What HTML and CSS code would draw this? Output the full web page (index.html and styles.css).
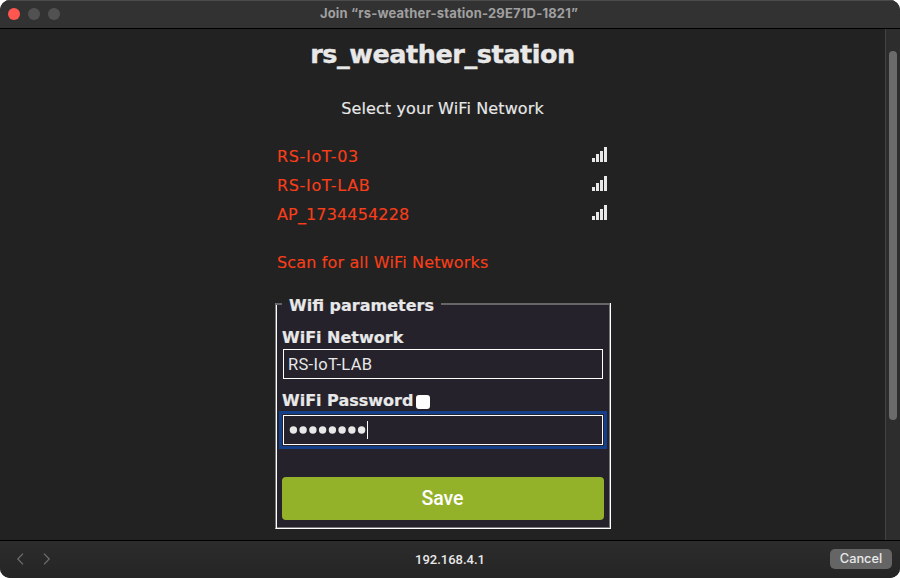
FILE: index.html
```html
<!DOCTYPE html>
<html lang="en">
<head>
<meta charset="utf-8">
<title>Join network</title>
<link rel="stylesheet" href="styles.css">
</head>
<body>
<div class="window">
  <header class="titlebar">
    <div class="lights"><i class="light close"></i><i class="light"></i><i class="light"></i></div>
    <span class="window-title">Join “rs-weather-station-29E71D-1821”</span>
  </header>
  <div class="viewport">
    <main class="page">
      <h1><span>rs_weather_station</span></h1>
      <p class="intro">Select your WiFi Network</p>
      <ul class="networks">
        <li><a class="wide">RS-IoT-03</a><svg class="signal" viewBox="0 0 15 15"><path d="M0 11h3v4H0zM4 7h3v8H4zM8 4h3v11H8zM12 0h3v15h-3z"/></svg></li>
        <li><a class="wide">RS-IoT-LAB</a><svg class="signal" viewBox="0 0 15 15"><path d="M0 11h3v4H0zM4 7h3v8H4zM8 4h3v11H8zM12 0h3v15h-3z"/></svg></li>
        <li><a>AP_1734454228</a><svg class="signal" viewBox="0 0 15 15"><path d="M0 11h3v4H0zM4 7h3v8H4zM8 4h3v11H8zM12 0h3v15h-3z"/></svg></li>
      </ul>
      <a class="scan">Scan for all WiFi Networks</a>
      <section class="panel">
        <div class="legend"><i class="stub"></i><b>Wifi parameters</b><i class="rule"></i></div>
        <div class="fields">
          <label class="label">WiFi Network</label>
          <div class="input">RS-IoT-LAB</div>
          <label class="label pass"><span>WiFi Password</span><i class="check"></i></label>
          <div class="input focused"><svg class="dots" viewBox="0 0 77 8"><g><circle cx="4.4" cy="4" r="3.7"/><circle cx="14.1" cy="4" r="3.7"/><circle cx="23.9" cy="4" r="3.7"/><circle cx="33.6" cy="4" r="3.7"/><circle cx="43.4" cy="4" r="3.7"/><circle cx="53.1" cy="4" r="3.7"/><circle cx="62.9" cy="4" r="3.7"/><circle cx="72.6" cy="4" r="3.7"/></g></svg><i class="caret"></i></div>
          <div class="save">Save</div>
        </div>
      </section>
    </main>
    <div class="scrollbar"><div class="thumb"></div></div>
  </div>
  <footer class="bottombar">
    <div class="nav">
      <svg viewBox="0 0 34 12"><path d="M6 .7.8 6 6 11.3M27 .7 32.2 6 27 11.3"/></svg>
    </div>
    <span class="address">192.168.4.1</span>
    <div class="cancel">Cancel</div>
  </footer>
</div>
</body>
</html>
```

FILE: styles.css
```css
* { box-sizing: border-box; }
html { background: #fff; }
body { margin: 0; width: 900px; height: 578px; overflow: hidden; color: #e8e8e8; }
.window { width: 900px; height: 578px; display: flex; flex-direction: column; background: #222; border-radius: 10px; overflow: hidden; }
.titlebar { height: 29px; flex: none; display: grid; grid-template-columns: 100px 1fr 102px; background: #323232; border-top: 1px solid #4b4b4b; border-bottom: 1px solid #000; }
.lights { display: flex; gap: 8px; padding: 7px 0 0 8px; }
.light { width: 12px; height: 12px; border-radius: 50%; background: #515151; }
.light.close { background: #ff564f; }
.window-title { font: 700 13px/25px Inter, sans-serif; letter-spacing: .18px; color: #a0a0a0; text-align: center; white-space: nowrap; }
.viewport { height: 511px; flex: none; display: flex; overflow: hidden; }
.page { width: 885px; padding-left: 275px; font: 16px/20px "DejaVu Sans", sans-serif; white-space: nowrap; }
h1 { width: 335px; margin: 9px 0 0; font-size: 25.5px; line-height: 32px; letter-spacing: -.45px; text-align: center; -webkit-text-stroke: .4px; }
.intro { width: 335px; margin: 29px 0 0; letter-spacing: .12px; text-align: center; -webkit-text-stroke: .15px; }
.networks { list-style: none; width: 332px; margin: 24px 0 0; padding: 0 0 0 2px; }
.networks li { height: 29px; display: flex; justify-content: space-between; align-items: flex-start; padding-top: 4px; }
.networks a, .scan { color: #fa3e19; line-height: 20px; letter-spacing: .15px; -webkit-text-stroke: .1px; }
.networks .wide { letter-spacing: .66px; }
.signal { width: 15px; height: 15px; fill: #e8e8e8; }
.scan { display: block; margin: 23px 0 0 2px; }
.panel { width: 336px; height: 226px; margin-top: 30px; background: #25222b; border-left: 1px solid #777; border-right: 1px solid #fff; border-bottom: 1px solid #fff; box-shadow: inset 1px 0 #fff, inset -1px -1px #777; }
.legend { height: 2px; display: flex; align-items: center; }
.stub { width: 6px; height: 2px; background: #666; }
.legend b { width: 159px; padding-left: 7px; height: 20px; line-height: 23px; -webkit-text-stroke: .2px; }
.rule { flex: 1; height: 2px; background: #666; }
.fields { padding: 23px 6px 0 5px; }
.label { display: block; height: 21px; padding-left: 1px; font-weight: 700; line-height: 20px; -webkit-text-stroke: .2px; }
.input { width: 320px; height: 30px; margin-left: 2px; padding-left: 4px; border: 1px solid #fff; font: 16.5px/29px Roboto, sans-serif; letter-spacing: .33px; }
.pass { display: flex; margin-top: 12px; height: 24px; }
.check { width: 14px; height: 14px; margin: 4px 0 0 3px; border-radius: 3px; background: #fff; }
.focused { display: flex; align-items: center; padding-left: 5px; outline: 3px solid #143f8b; outline-offset: 1px; border-radius: 0; }
.dots { width: 77px; height: 8px; fill: #e8e8e8; }
.caret { width: 1px; height: 18px; margin-left: 1px; background: #fff; }
.save { width: 322px; height: 43px; margin: 32px 0 0 1px; border-radius: 4px; background: #94b229; color: #fff; text-align: center; font: 500 19.5px/44px Roboto, sans-serif; letter-spacing: -.1px; text-indent: -1px; }
.scrollbar { width: 15px; padding: 22px 0 0 3px; background: #2d2d2d; border-left: 1px solid #434343; }
.thumb { width: 8px; height: 369px; border-radius: 4px; background: #6b6b6b; }
.bottombar { height: 38px; flex: none; display: grid; grid-template-columns: 100px 1fr 100px; background: linear-gradient(#2c2c2c, #252525); border-top: 1px solid #000; }
.nav { padding: 12px 0 0 17px; }
.nav svg { display: block; width: 34px; height: 12px; fill: none; stroke: #707070; stroke-width: 1.2; }
.address { font: 500 13px/37px Roboto, sans-serif; text-align: center; }
.cancel { width: 62px; height: 20px; margin: 8px 0 0 30px; border-radius: 5px; background: #656565; text-align: center; font: 500 12.8px/19px Inter, sans-serif; }
```
